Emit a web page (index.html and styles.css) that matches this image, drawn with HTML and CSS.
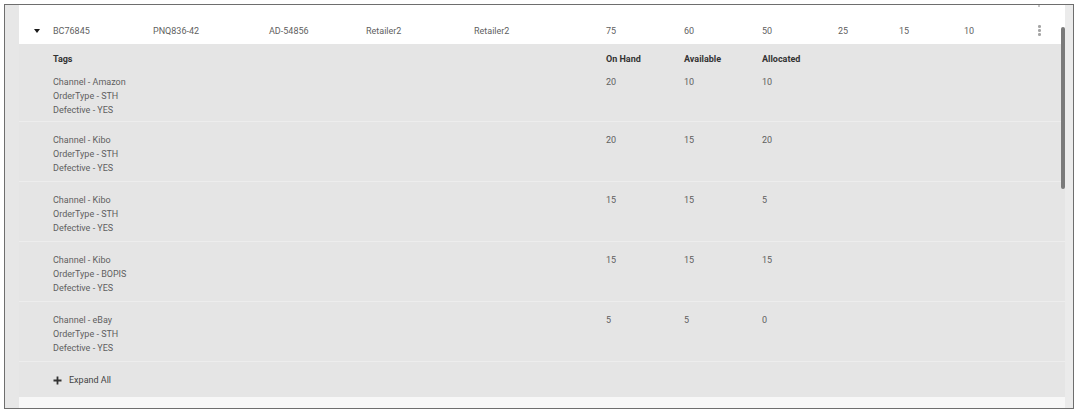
FILE: index.html
```html
<!DOCTYPE html>
<html>
<head>
<meta charset="utf-8">
<link rel="stylesheet" href="styles.css">
</head>
<body>
<div class="frame">
  <div class="gutter-left"></div>
  <div class="content">
    <div class="prev-dot"></div>
    <div class="main-row">
      <div class="cell caret-cell"><span class="caret"></span></div>
      <div class="cell">BC76845</div>
      <div class="cell">PNQ836-42</div>
      <div class="cell">AD-54856</div>
      <div class="cell">Retailer2</div>
      <div class="cell">Retailer2</div>
      <div class="cell">75</div>
      <div class="cell">60</div>
      <div class="cell">50</div>
      <div class="cell">25</div>
      <div class="cell">15</div>
      <div class="cell">10</div>
      <div class="cell kebab-cell"><span class="kebab"><i></i><i></i><i></i></span></div>
    </div>
    <div class="detail">
      <div class="sub-head">
        <div>Tags</div>
        <div>On Hand</div>
        <div>Available</div>
        <div>Allocated</div>
      </div>
      <div class="sub-row first">
        <div class="tags">Channel - Amazon<br>OrderType - STH<br>Defective - YES</div>
        <div>20</div><div>10</div><div>10</div>
      </div>
      <div class="sub-row">
        <div class="tags">Channel - Kibo<br>OrderType - STH<br>Defective - YES</div>
        <div>20</div><div>15</div><div>20</div>
      </div>
      <div class="sub-row">
        <div class="tags">Channel - Kibo<br>OrderType - STH<br>Defective - YES</div>
        <div>15</div><div>15</div><div>5</div>
      </div>
      <div class="sub-row">
        <div class="tags">Channel - Kibo<br>OrderType - BOPIS<br>Defective - YES</div>
        <div>15</div><div>15</div><div>15</div>
      </div>
      <div class="sub-row">
        <div class="tags">Channel - eBay<br>OrderType - STH<br>Defective - YES</div>
        <div>5</div><div>5</div><div>0</div>
      </div>
      <div class="expand-row">
        <svg class="plus" width="9" height="9" viewBox="0 0 9 9"><path d="M4.5 0.5v8M0.5 4.5h8" stroke="#333" stroke-width="1.8"/></svg>
        <span>Expand All</span>
      </div>
    </div>
    <div class="bottom-strip"></div>
    <div class="scroll-thumb"></div>
  </div>
  <div class="gutter-right"></div>
</div>
</body>
</html>
```

FILE: styles.css
```css
html, body {
  margin: 0;
  padding: 0;
  background: #ffffff;
}
body {
  padding: 4px 6px 0 4px;
  font-family: Roboto, "Liberation Sans", Arial, sans-serif;
  font-size: 9px;
  color: #5f5f5f;
}
.frame {
  display: flex;
  height: 403px;
  border: 1px solid #6e6e6e;
  overflow: hidden;
  background: #e8e8e8;
}
.gutter-left {
  width: 14px;
  flex: none;
  background: #e7e7e7;
}
.gutter-right {
  width: 8px;
  flex: none;
  background: #ebebeb;
}
.content {
  flex: 1;
  position: relative;
  display: flex;
  flex-direction: column;
  background: #e5e5e5;
}
.prev-dot {
  position: absolute;
  left: 1019px;
  top: 0;
  width: 2px;
  height: 2px;
  border-radius: 1px;
  background: #b0b0b0;
}
.main-row {
  display: grid;
  grid-template-columns: 34px 100px 116px 97px 108px 132px 78px 78px 76px 61px 65px 1fr 26px;
  align-items: center;
  height: 40px;
  padding-top: 12px;
  box-sizing: border-box;
  background: #ffffff;
}
.cell {
  line-height: 14px;
  white-space: nowrap;
}
.caret-cell {
  padding-left: 15px;
  display: flex;
  align-items: center;
}
.caret {
  width: 0;
  height: 0;
  border-left: 3.5px solid transparent;
  border-right: 3.5px solid transparent;
  border-top: 4px solid #1a1a1a;
}
.kebab-cell {
  display: flex;
}
.kebab {
  display: flex;
  flex-direction: column;
  gap: 1.5px;
  margin-left: -1px;
}
.kebab i {
  display: block;
  width: 2.5px;
  height: 2.5px;
  border-radius: 50%;
  background: #a5a5a5;
}
.detail {
  flex: 1;
  padding-left: 34px;
}
.sub-head, .sub-row {
  display: grid;
  grid-template-columns: 553px 78px 78px 1fr;
}
.sub-head {
  padding-top: 8px;
  height: 22px;
  box-sizing: border-box;
  line-height: 14px;
  font-weight: 700;
  color: #333333;
}
.sub-row {
  line-height: 14px;
  padding-top: 11px;
  padding-bottom: 8px;
  border-bottom: 1px solid #ededed;
  margin-left: -34px;
  padding-left: 34px;
}
.sub-row.first {
  padding-top: 9px;
  height: 56px;
  box-sizing: border-box;
}
.sub-row:not(.first) {
  height: 60px;
  box-sizing: border-box;
}
.expand-row {
  display: flex;
  align-items: center;
  gap: 7px;
  height: 35px;
  padding-top: 1px;
  box-sizing: border-box;
  color: #444;
}
.bottom-strip {
  height: 11px;
  background: #f7f7f7;
}
.scroll-thumb {
  position: absolute;
  right: 0;
  top: 22px;
  width: 4px;
  height: 162px;
  border-radius: 2px;
  background: #7a7a7a;
}
```
